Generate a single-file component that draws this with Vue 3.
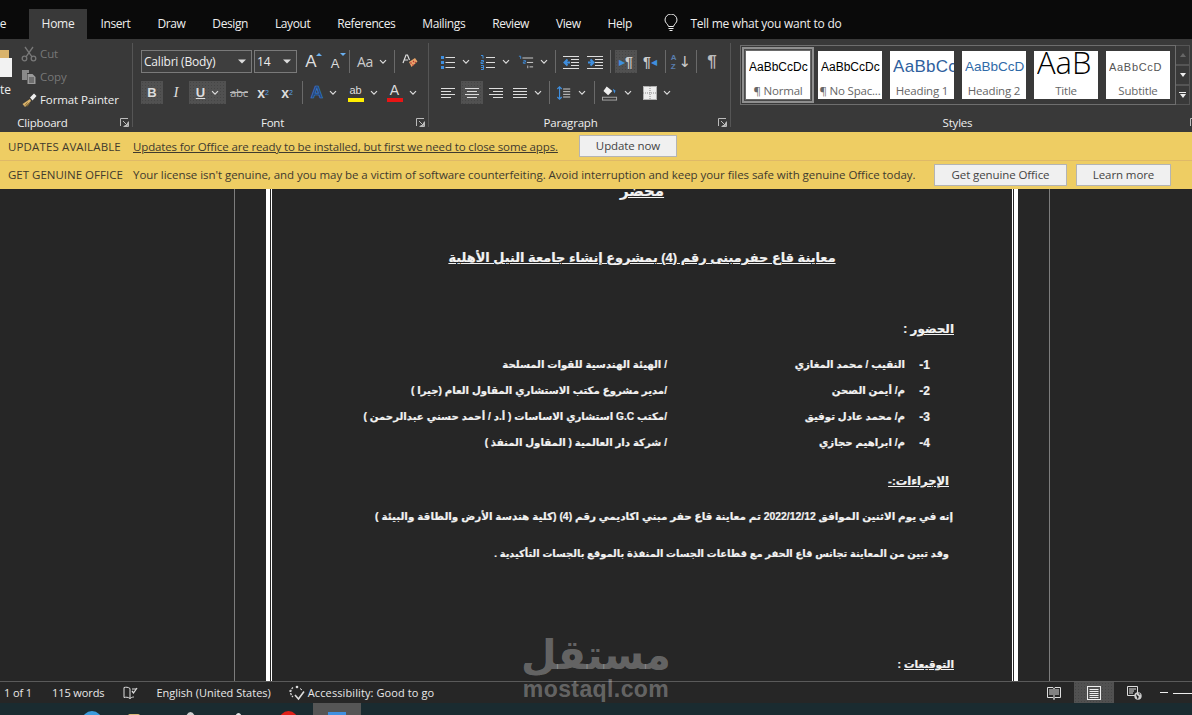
<script setup>
const tabs = ['Insert', 'Draw', 'Design', 'Layout', 'References', 'Mailings', 'Review', 'View', 'Help']
const styles = [
  { preview: 'AaBbCcDc', label: '¶ Normal', kind: 'normal' },
  { preview: 'AaBbCcDc', label: '¶ No Spac...', kind: 'plain' },
  { preview: 'AaBbCc', label: 'Heading 1', kind: 'h1' },
  { preview: 'AaBbCcD', label: 'Heading 2', kind: 'h2' },
  { preview: 'AaB', label: 'Title', kind: 'title' },
  { preview: 'AaBbCcD', label: 'Subtitle', kind: 'sub' }
]
const people = [
  ['1-', 'النقيب / محمد المغازي', '/ الهيئة الهندسية للقوات المسلحة'],
  ['2-', 'م/ أيمن الصحن', '/مدير مشروع مكتب الاستشاري المقاول العام (جيرا )'],
  ['3-', 'م/ محمد عادل توفيق', '/مكتب G.C استشاري الاساسات ( أ.د / أحمد حسني عبدالرحمن )'],
  ['4-', 'م/ ابراهيم حجازي', '/ شركة دار العالمية ( المقاول المنفذ )']
]
</script>

<template>
  <div class="app">
    <svg class="defs" aria-hidden="true">
      <symbol id="chev" viewBox="0 0 8 6"><path d="M1 1.2l3 3 3-3" fill="none" stroke="#ddd" stroke-width="1.2"/></symbol>
      <symbol id="tri" viewBox="0 0 8 5"><path d="M0 .5h8L4 4.5z" fill="#ddd"/></symbol>
      <symbol id="launch" viewBox="0 0 9 9"><path d="M.5 8V.5H8M8.5 3.5v5h-5M3 3l4 4M7.5 4.5v3h-3" fill="none" stroke="#bbb" stroke-width="1"/></symbol>
      <symbol id="cut" viewBox="0 0 16 16"><g fill="none" stroke="#787878" stroke-width="1.3"><circle cx="3.5" cy="12.5" r="2.3"/><circle cx="12.5" cy="12.5" r="2.3"/><path d="M5 10.8L12 1M11 10.8L4 1"/></g></symbol>
      <symbol id="copy" viewBox="0 0 16 16"><path d="M1 1h7v3H6v7H1z" fill="#8a8a8a"/><path d="M6.5 5h5l3 3v7h-8z" fill="#9a9a9a"/><path d="M8 9h5M8 11h5M8 13h5" stroke="#444"/></symbol>
      <symbol id="brush" viewBox="0 0 16 16"><path d="M9 7L1.5 12l2.5 3 6-6z" fill="#d9b36c"/><path d="M9 5.5l2.5 3L15.500 4 13 1.500z" fill="#eee"/><path d="M4 13.500L6.500 10.500M6 14.500L8.500 11" stroke="#8a6a30"/></symbol>
      <symbol id="clear" viewBox="0 0 16 16"><path d="M7 8l6-4 2.500 3.500-6 5.500z" fill="#e8a46a"/><path d="M8.500 8.500l1 1M11 7l1 1M10.500 10.500l1 1M13 8l.8.800" stroke="#b33" stroke-width="1.200"/><path d="M1 9L4 1h1.500l2 5M2.500 6h3.500" fill="none" stroke="#ddd" stroke-width="1.200"/></symbol>
      <symbol id="bul" viewBox="0 0 16 16"><path d="M1 2h3v3H1zM1 7h3v3H1zM1 12h3v3H1z" fill="#3f8fdf"/><path d="M5.500 3.500H15M5.500 8.500H15M5.500 13.500H15" stroke="#ddd"/></symbol>
      <symbol id="num" viewBox="0 0 16 16"><path d="M1 1.500h2v3M1 6.500h2.500v1.500H1v1.500h2.500M1 11.500h2.500v4H1M1 13.500h2.500" fill="none" stroke="#3f8fdf"/><path d="M6 3.500H15M6 8.500H15M6 13.500H15" stroke="#ddd"/></symbol>
      <symbol id="multi" viewBox="0 0 18 16"><path d="M1 1.500h2v3M6 6.500h2.500v1.500H6v1.500h2.500" fill="none" stroke="#3f8fdf"/><path d="M11 12v3" stroke="#ccc"/><path d="M5 3.500H17M10 8.500H17M13 13.500H17" stroke="#ddd"/></symbol>
      <symbol id="out" viewBox="0 0 16 16"><path d="M0 2.500H16M8 5.500H16M8 8.500H16M8 11.500H16M0 14.500H16" stroke="#ddd"/><path d="M7 8.500H3M4.500 5.500L1.500 8.500l3 3" fill="none" stroke="#3f8fdf" stroke-width="2"/></symbol>
      <symbol id="ind" viewBox="0 0 16 16"><path d="M0 2.500H16M8 5.500H16M8 8.500H16M8 11.500H16M0 14.500H16" stroke="#ddd"/><path d="M1 8.500h4M3.500 5.500l3 3-3 3" fill="none" stroke="#3f8fdf" stroke-width="2"/></symbol>
      <symbol id="al" viewBox="0 0 16 16"><path d="M1 3.500H15M1 6.500H11M1 9.500H15M1 12.500H11" stroke="#ddd"/></symbol>
      <symbol id="ac" viewBox="0 0 16 16"><path d="M1 3.500H15M3 6.500H13M1 9.500H15M3 12.500H13" stroke="#ddd"/></symbol>
      <symbol id="ar" viewBox="0 0 16 16"><path d="M1 3.500H15M5 6.500H15M1 9.500H15M5 12.500H15" stroke="#ddd"/></symbol>
      <symbol id="aj" viewBox="0 0 16 16"><path d="M1 3.500H15M1 6.500H15M1 9.500H15M1 12.500H15" stroke="#ddd"/></symbol>
      <symbol id="ls" viewBox="0 0 16 18"><path d="M3 2v14M.500 4.500L3 2l2.500 2.500M.500 13.500L3 16l2.500-2.500" fill="none" stroke="#3f8fdf" stroke-width="1.300"/><path d="M7 4.500h8M7 7.500h8M7 10.500h8M7 13.500h8" stroke="#ddd"/></symbol>
      <symbol id="shade" viewBox="0 0 17 16"><path d="M5 1L1.500 6l5 4.500L11 6z" fill="#eee"/><path d="M11.500 3.500l3 2-1.500 3z" fill="#3f8fdf"/><rect x=".500" y="12.500" width="15" height="3" fill="none" stroke="#aaa"/></symbol>
      <symbol id="bord" viewBox="0 0 14 14"><rect width="14" height="14" fill="#eee"/><path d="M7 0v14M0 7h14" stroke="#888" stroke-dasharray="1 1"/><path d="M.500.500h13v13H.500z" fill="none" stroke="#777" stroke-dasharray="1 1"/></symbol>
      <symbol id="proof" viewBox="0 0 15 14"><path d="M7 2.500C5 1 3 1 1 1.500v10c2-.5 4-.5 6 1 2-1.500 3-1.500 4-1.500M7 2.500v10M9 3h4" fill="none" stroke="#ddd"/><path d="M9 5l1.500 2L14 2" fill="none" stroke="#ddd" stroke-width="1.300"/></symbol>
      <symbol id="acc" viewBox="0 0 16 16"><path d="M4 2.500A6 6 0 0 0 4 12" fill="none" stroke="#ddd" stroke-width="1.300" stroke-dasharray="2 1"/><circle cx="8" cy="2" r="1.300" fill="#ddd"/><path d="M11 3.500l2 1.500M2 6H0" stroke="#ddd"/><path d="M6 10l3.500 4L15 6.500" fill="none" stroke="#ddd" stroke-width="1.600"/></symbol>
      <symbol id="read" viewBox="0 0 14 14"><path d="M.500 1.500h5.500l1 1 1-1h5.500v10H8l-1 1-1-1H.500z" fill="none" stroke="#ddd"/><path d="M2 4h4M2 6h4M2 8h4M8 4h4M8 6h4M8 8h4M7 2v12" stroke="#ddd"/></symbol>
      <symbol id="print" viewBox="0 0 14 14"><rect x=".500" y=".500" width="13" height="13" fill="none" stroke="#eee"/><path d="M2.500 3.500h9M2.500 5.500h9M2.500 7.500h9M2.500 9.500h9M2.500 11.500h9" stroke="#eee"/></symbol>
      <symbol id="web" viewBox="0 0 15 14"><path d="M.500.500h10v9h-10z" fill="none" stroke="#ddd"/><path d="M2 3h7M2 5h5M2 7h4" stroke="#ddd"/><circle cx="11" cy="10" r="3.700" fill="#ccc"/><path d="M9 8.500l2.500 2L10.500 13M12 7l1 2" stroke="#555"/></symbol>
      <symbol id="bulb" viewBox="0 0 14 18"><path d="M4.500 12.500C4 10 1 9 1 6a6 6 0 0 1 12 0c0 3-3 4-3.500 6.500z" fill="none" stroke="#eee"/><path d="M4.500 14.500h5M5.500 16.500h3" stroke="#eee"/></symbol>
    </svg>

    <div class="tabbar">
      <span class="tab cut-tab">File</span>
      <span class="tab active">Home</span>
      <span v-for="t in tabs" :key="t" class="tab">{{ t }}</span>
      <span class="tell">
        <svg class="bulb"><use href="#bulb"/></svg>
        Tell me what you want to do
      </span>
    </div>

    <div class="ribbon">
      <section class="group clip">
        <div class="clip-body">
          <div class="paste">
            <div class="paste-ico"><span class="paste-top"></span><span class="paste-doc"></span></div>
            <span class="paste-txt">Paste</span>
          </div>
          <div class="clip-list">
            <div class="clip-row dim"><svg class="i16"><use href="#cut"/></svg>Cut</div>
            <div class="clip-row dim"><svg class="i16"><use href="#copy"/></svg>Copy</div>
            <div class="clip-row"><svg class="i16"><use href="#brush"/></svg>Format Painter</div>
          </div>
        </div>
        <div class="glabel lab-clip">Clipboard</div>
        <svg class="launch"><use href="#launch"/></svg>
      </section>

      <section class="group font">
        <div class="row fr1">
          <div class="combo c-font"><span>Calibri (Body)</span><svg class="tri"><use href="#tri"/></svg></div>
          <div class="combo c-size"><span>14</span><svg class="tri"><use href="#tri"/></svg></div>
          <div class="ct"><span class="glyph big">A</span><span class="caret up"></span></div>
          <div class="ct"><span class="glyph small">A</span><span class="caret down"></span></div>
          <i class="sep"></i>
          <div class="ct"><span class="aa">Aa</span><svg class="chev"><use href="#chev"/></svg></div>
          <i class="sep"></i>
          <div class="ct"><svg class="i16"><use href="#clear"/></svg></div>
        </div>
        <div class="row fr2">
          <div class="ct on"><b class="glyph">B</b></div>
          <div class="ct"><em class="glyph ital">I</em></div>
          <div class="ct on"><b class="glyph under">U</b><svg class="chev"><use href="#chev"/></svg></div>
          <div class="ct"><span class="strike">abc</span></div>
          <div class="ct"><b class="glyph xx">x</b><sub class="scr">2</sub></div>
          <div class="ct"><b class="glyph xx">x</b><sup class="scr">2</sup></div>
          <i class="sep"></i>
          <div class="ct"><span class="glyph fx">A</span><svg class="chev"><use href="#chev"/></svg></div>
          <div class="ct"><span class="colored hl">ab</span><svg class="chev"><use href="#chev"/></svg></div>
          <div class="ct"><span class="colored fc">A</span><svg class="chev"><use href="#chev"/></svg></div>
        </div>
        <div class="glabel lab-font">Font</div>
        <svg class="launch"><use href="#launch"/></svg>
      </section>

      <section class="group para">
        <div class="row pr1">
          <div class="ct"><svg class="i16"><use href="#bul"/></svg><svg class="chev"><use href="#chev"/></svg></div>
          <div class="ct"><svg class="i16"><use href="#num"/></svg><svg class="chev"><use href="#chev"/></svg></div>
          <div class="ct"><svg class="i16"><use href="#multi"/></svg><svg class="chev"><use href="#chev"/></svg></div>
          <i class="sep"></i>
          <div class="ct"><svg class="i16"><use href="#out"/></svg></div>
          <div class="ct"><svg class="i16"><use href="#ind"/></svg></div>
          <i class="sep"></i>
          <div class="ct on ltr"><span class="mk">▶</span><b class="pil">¶</b></div>
          <div class="ct"><b class="pil">¶</b><span class="mk">◀</span></div>
          <i class="sep"></i>
          <div class="ct sort"><span class="az">A<br>Z</span><span class="arrow">↓</span></div>
          <i class="sep"></i>
          <div class="ct"><b class="pil large">¶</b></div>
        </div>
        <div class="row pr2">
          <div class="ct"><svg class="i16"><use href="#al"/></svg></div>
          <div class="ct on"><svg class="i16"><use href="#ac"/></svg></div>
          <div class="ct"><svg class="i16"><use href="#ar"/></svg></div>
          <div class="ct"><svg class="i16"><use href="#aj"/></svg><svg class="chev"><use href="#chev"/></svg></div>
          <i class="sep"></i>
          <div class="ct"><svg class="i16"><use href="#ls"/></svg><svg class="chev"><use href="#chev"/></svg></div>
          <i class="sep"></i>
          <div class="ct"><svg class="i16"><use href="#shade"/></svg><svg class="chev"><use href="#chev"/></svg></div>
          <div class="ct"><svg class="i14"><use href="#bord"/></svg><svg class="chev"><use href="#chev"/></svg></div>
        </div>
        <div class="glabel lab-para">Paragraph</div>
        <svg class="launch"><use href="#launch"/></svg>
      </section>

      <section class="group gallery-group">
        <div class="gallery-wrap">
          <div class="gallery">
            <div v-for="s in styles" :key="s.kind" class="tile" :class="s.kind">
              <div class="pv">{{ s.preview }}</div>
              <div class="tl">{{ s.label }}</div>
            </div>
          </div>
          <div class="gscroll">
            <div class="gs"><span class="gt dimmed"></span></div>
            <div class="gs"><span class="gt"></span></div>
            <div class="gs"><span class="gbar"></span><span class="gt"></span></div>
          </div>
        </div>
        <div class="glabel lab-styles">Styles</div>
        <svg class="launch last"><use href="#launch"/></svg>
      </section>
    </div>

    <div class="msg first">
      <span class="mlabel">UPDATES AVAILABLE</span>
      <span class="mtext link">Updates for Office are ready to be installed, but first we need to close some apps.</span>
      <button class="mbtn b-update">Update now</button>
    </div>
    <div class="msg second">
      <span class="mlabel">GET GENUINE OFFICE</span>
      <span class="mtext">Your license isn't genuine, and you may be a victim of software counterfeiting. Avoid interruption and keep your files safe with genuine Office today.</span>
      <button class="mbtn b-genuine">Get genuine Office</button>
      <button class="mbtn b-learn">Learn more</button>
    </div>

    <main class="doc">
      <div class="page">
        <div class="frame">
          <div class="inner" dir="rtl">
            <h1 class="t-main">محضر</h1>
            <h2 class="t-sub">معاينة قاع حفرمبنى رقم (4) بمشروع إنشاء جامعة النيل الأهلية</h2>
            <p class="ln h-att"><u>الحضور</u> :</p>
            <div class="people">
              <div v-for="p in people" :key="p[0]" class="person">
                <span class="pnum">{{ p[0] }}</span><span>{{ p[1] }}</span><span>{{ p[2] }}</span>
              </div>
            </div>
            <p class="ln h-proc"><u>الإجراءات:-</u></p>
            <p class="ln p1">إنه في يوم الاثنين الموافق 2022/12/12 تم معاينة قاع حفر مبني اكاديمي رقم (4) (كلية هندسة الأرض والطاقة والبيئة )</p>
            <p class="ln p2">وقد تبين من المعاينة تجانس قاع الحفر مع قطاعات الجسات المنفذة بالموقع بالجسات التأكيدية .</p>
            <p class="ln h-sign"><u>التوقيعات</u> :</p>
          </div>
        </div>
      </div>
    </main>

    <footer class="status">
      <span class="st s-page">1 of 1</span>
      <span class="st s-words">115 words</span>
      <svg class="i15 s-proof"><use href="#proof"/></svg>
      <span class="st s-lang">English (United States)</span>
      <svg class="i16 s-acc"><use href="#acc"/></svg>
      <span class="st s-a11y">Accessibility: Good to go</span>
      <svg class="i14 s-read"><use href="#read"/></svg>
      <div class="s-print"><svg class="i14"><use href="#print"/></svg></div>
      <svg class="i15 s-web"><use href="#web"/></svg>
      <span class="s-minus"></span>
      <span class="s-slider"></span>
    </footer>

    <div class="taskbar">
      <span class="tb tb1"></span>
      <span class="tb tb2"></span>
      <span class="tb tb3"></span>
      <span class="tb tb4"></span>
      <span class="tb tb5"></span>
      <span class="tb-active"><span class="tb-word"></span></span>
    </div>

    <div class="mark">
      <div class="mark-ar" dir="rtl">مستقل</div>
      <div class="mark-en">mostaql.com</div>
    </div>
  </div>
</template>

<style scoped>
.app {
  position: relative;
  width: 1192px;
  height: 715px;
  overflow: hidden;
  display: flex;
  flex-direction: column;
  background: #262626;
  font-family: "Open Sans", "Noto Sans", sans-serif;
  font-size: 11.5px;
  color: #eee;
}
.defs { position: absolute; width: 0; height: 0; }

/* tabs */
.tabbar {
  height: 39px;
  flex: none;
  background: #0a0a0a;
  display: flex;
  align-items: flex-end;
}
.tab {
  height: 30px;
  line-height: 30px;
  padding: 0 13.500px;
  font-size: 12px;
  letter-spacing: -.41px;
  color: #eee;
  white-space: nowrap;
}
.cut-tab { width: 29px; box-sizing: border-box; padding: 0 23px 0 0; text-align: right; direction: rtl; overflow: hidden; }
.active { background: #393939; padding: 0 12px; width: 58px; box-sizing: border-box; text-align: center; letter-spacing: -.25px; }
.tell {
  display: flex;
  align-items: center;
  height: 28px;
  margin: 0 0 2px 19px;
  font-size: 12px;
  letter-spacing: -.25px;
  gap: 12px;
  color: #eee;
}
.bulb { width: 14px; height: 18px; }

/* ribbon */
.ribbon {
  height: 93px;
  flex: none;
  background: #393939;
  display: flex;
}
.group {
  position: relative;
  box-sizing: border-box;
  margin-top: 4px;
  height: 84px;
  padding-top: 7px;
  border-right: 1px solid #555;
  flex: none;
}
.glabel {
  position: absolute;
  left: 0;
  right: 0;
  top: 73px;
  height: 14px;
  line-height: 14px;
  font-size: 11.500px;
  letter-spacing: -.2px;
  text-align: center;
  color: #eee;
}
.launch { position: absolute; right: 3px; bottom: 0; width: 9px; height: 9px; }
.launch.last { right: -7px; }

.clip { width: 133px; padding-top: 0; }
.clip-body { display: flex; margin-top: -1px; }
.paste {
  width: 21px;
  height: 70px;
  overflow: hidden;
  display: flex;
  flex-direction: column;
  align-items: flex-end;
}
.paste-ico { position: relative; width: 21px; height: 34px; margin-top: 8px; flex: none; }
.paste-top { position: absolute; left: -6px; top: 0; width: 15px; height: 8px; background: #d9b36c; }
.paste-doc { position: absolute; left: -10px; top: 8px; width: 22px; height: 19px; background: #f2f2f2; }
.paste-txt { width: 21px; padding-right: 10px; box-sizing: border-box; direction: rtl; margin-top: -2px; line-height: 16px; white-space: nowrap; overflow: hidden; flex: none; font-size: 12px; }
.clip-list { display: flex; flex-direction: column; }
.clip-row { height: 23px; display: flex; align-items: center; gap: 3px; letter-spacing: -.1px; white-space: nowrap; }
.dim { color: #777; }
.lab-clip { right: auto; left: 17px; width: 51px; }
.lab-font { right: 16px; }
.lab-para { right: 18px; }
.lab-styles { right: 8px; }
.i16 { width: 16px; height: 16px; flex: none; display: block; }
.i14 { width: 14px; height: 14px; flex: none; display: block; }
.i15 { width: 15px; height: 14px; flex: none; display: block; }
.chev { width: 8px; height: 6px; flex: none; margin-left: 6px; }
.tri { width: 8px; height: 5px; flex: none; }

.font { width: 296px; padding-left: 8px; }
.para { width: 302px; padding-left: 6px; }
.row { display: grid; height: 23px; align-items: center; }
.row + .row { margin-top: 8px; }
.fr1 { grid-template-columns: 113px 43px 28px 20px 5px 44px 1px 30px; }
.fr2 { grid-template-columns: 22px 26px 37px 26px 22px 26px 3px 42px 35px 43px; }
.pr1 { grid-template-columns: 40px 39px 37px 5px 30px 18px 7px 26px 26px 3px 30px 1px 30px; }
.pr2 { grid-template-columns: 26px 22px 26px 35px 6px 42px 3px 44px 35px; }
.sep { justify-self: end; width: 1px; height: 23px; background: #6a6a6a; display: block; }
.ct { height: 23px; display: flex; align-items: center; justify-content: center; position: relative; }
.on {
  background-color: #515151;
  background-image: radial-gradient(#454545 .6px, transparent .7px);
  background-size: 3px 3px;
}
.ltr { margin-left: 4px; }
.combo {
  box-sizing: border-box;
  height: 23px;
  border: 1px solid #7a7a7a;
  background: #3e3e3e;
  display: flex;
  align-items: center;
  justify-content: space-between;
  padding: 0 5px 0 2px;
  font-size: 12px;
  letter-spacing: -.2px;
}
.c-font { width: 111px; }
.c-size { width: 43px; }
.glyph { font-family: "Liberation Sans", sans-serif; font-size: 13px; color: #ddd; line-height: 1; }
.big { font-size: 17px; }
.small { font-size: 13px; margin-top: 3px; }
.xx { font-size: 14px; }
.caret { position: absolute; top: 3px; margin-left: 15px; width: 0; height: 0; border-left: 3px solid transparent; border-right: 3px solid transparent; }
.caret.up { border-bottom: 3px solid #6ab0f0; }
.caret.down { border-top: 3px solid #6ab0f0; }
.aa { font-size: 14px; color: #ccc; letter-spacing: -.2px; }
.ital { font-family: "Liberation Serif", serif; font-size: 15px; }
.under { text-decoration: underline; }
.strike { font-size: 11.500px; color: #bbb; text-decoration: line-through; letter-spacing: -.3px; }
.scr { font-size: 7px; color: #5aa5ea; font-family: "Liberation Sans", sans-serif; line-height: 1; }
.fx { color: #23457a; font-size: 17px; font-weight: 700; -webkit-text-stroke: .7px #3a7fd5; }
.colored { display: block; width: 16px; text-align: center; color: #ddd; font-family: "Liberation Sans", sans-serif; line-height: 14px; padding-bottom: 1px; }
.hl { border-bottom: 4px solid #ffee00; font-size: 11px; }
.fc { border-bottom: 4px solid #e81515; font-size: 14px; }
.pil { font-family: "Liberation Sans", sans-serif; font-size: 14px; color: #ccc; line-height: 1; }
.pil.large { font-size: 17px; color: #bbb; }
.mk { font-size: 8px; color: #3f8fdf; line-height: 1; }
.sort { gap: 2px; }
.az { font-size: 8px; line-height: 9px; color: #5a7fb0; font-weight: 700; font-family: "Liberation Sans", sans-serif; }
.arrow { font-size: 15px; color: #ccc; font-family: "DejaVu Sans", sans-serif; }

/* styles gallery */
.gallery-group { flex: 1; border-right: 0; padding: 2px 0 0 9px; }
.gallery-wrap { display: flex; }
.gallery {
  box-sizing: border-box;
  width: 436px;
  height: 60px;
  border: 1px solid #6e6e6e;
  padding: 5px;
  display: flex;
  gap: 8px;
}
.tile {
  width: 64px;
  height: 48px;
  flex: none;
  background: #fff;
  overflow: hidden;
  display: flex;
  flex-direction: column;
  align-items: center;
  color: #000;
}
.normal { box-shadow: 0 0 0 1px #6a6a6a, 0 0 0 2px #4a4a4a, 0 0 0 4px #8f8f8f; }
.pv {
  height: 32px;
  line-height: 32px;
  width: 61px;
  margin-left: 3px;
  overflow: hidden;
  white-space: nowrap;
  font-family: "Liberation Sans", sans-serif;
  font-size: 12px;
  flex: none;
}
.tl { font-size: 11.500px; letter-spacing: -.2px; color: #666; line-height: 16px; white-space: nowrap; }
.h1 .pv { font-size: 17px; color: #2f5f9e; letter-spacing: .3px; }
.h2 .pv { font-size: 13.500px; color: #2f6aa8; }
.title .pv { font-family: "Open Sans", sans-serif; font-weight: 300; font-size: 31px; line-height: 22px; width: 64px; margin-left: 6px; }
.sub .pv { font-size: 11px; color: #555; letter-spacing: .7px; }
.gscroll { display: flex; flex-direction: column; width: 14px; }
.gs {
  box-sizing: border-box;
  height: 20px;
  border: 1px solid #555;
  border-left: 0;
  display: flex;
  flex-direction: column;
  align-items: center;
  justify-content: center;
  gap: 1px;
}
.gt { width: 0; height: 0; border-left: 3.500px solid transparent; border-right: 3.500px solid transparent; border-top: 4px solid #eee; }
.gt.dimmed { border-top: 0; border-bottom: 4px solid #666; }
.gbar { width: 7px; height: 1px; background: #eee; }

/* message bars */
.msg {
  flex: none;
  box-sizing: border-box;
  height: 28.500px;
  background: #eecd63;
  color: #3f3a2e;
  display: flex;
  align-items: center;
  padding-left: 8px;
  font-size: 11.500px;
  letter-spacing: -.05px;
  white-space: nowrap;
}
.first { border-bottom: 1px solid #dfb968; padding-top: 2px; }
.mlabel { width: 125px; flex: none; letter-spacing: .13px; }
.second .mlabel { letter-spacing: 0; }
.mtext { flex: none; }
.link { text-decoration: underline; width: 446px; letter-spacing: -.13px; }
.mbtn {
  box-sizing: border-box;
  height: 22px;
  padding: 0;
  background: #f0f0f0;
  border: 1px solid #b4b4b4;
  color: #444;
  font: inherit;
  letter-spacing: -.1px;
  flex: none;
}
.first .mbtn { margin-top: -2px; }
.b-update { width: 98px; }
.second .mtext { width: 801px; }
.b-genuine { width: 133px; }
.b-learn { width: 95px; margin-left: 9px; }

/* document */
.doc { flex: none; height: 492px; background: #262626; overflow: hidden; }
.page {
  box-sizing: border-box;
  margin-left: 234px;
  width: 816px;
  height: 100%;
  border-left: 1px solid #7c7c7c;
  border-right: 1px solid #7c7c7c;
  padding: 0 31px;
}
.frame {
  box-sizing: border-box;
  height: 100%;
  border-left: 4px solid #fff;
  border-right: 4px solid #fff;
  padding: 0 1px;
}
.inner {
  display: flow-root;
  box-sizing: border-box;
  height: 100%;
  border-left: 1px solid #fff;
  border-right: 1px solid #fff;
  font-family: "Liberation Sans", "DejaVu Sans", sans-serif;
  font-weight: 700;
  font-size: 10.400px;
  color: #f2f2f2;
  -webkit-text-stroke: .2px #f2f2f2;
}
.t-main { margin: -10px 0 0; font-size: 15px; line-height: 24px; text-align: center; text-decoration: underline; font-weight: 700; }
.t-sub { margin: 44px 0 0; font-size: 12.900px; line-height: 22px; text-align: center; text-decoration: underline; font-weight: 700; }
.ln { margin: 0; line-height: 20px; white-space: nowrap; }
.h-att { margin-top: 50px; padding-right: 58px; font-size: 12px; }
.people { margin-top: 16px; padding-right: 82px; }
.person { display: grid; grid-template-columns: 25px 238px 1fr; height: 26px; line-height: 20px; white-space: nowrap; font-size: 10.200px; }
.pnum { font-size: 12px; }
.h-proc { margin-top: 12px; padding-right: 63px; font-size: 11.500px; }
.p1 { margin-top: 16px; padding-right: 59px; }
.p2 { margin-top: 17px; padding-right: 63px; font-size: 9.900px; }
.h-sign { margin-top: 90px; padding-right: 58px; font-size: 10.500px; }

/* status */
.status {
  flex: none;
  box-sizing: border-box;
  height: 22px;
  background: #262626;
  border-top: 1px solid #5a5a5a;
  display: flex;
  align-items: center;
  font-size: 11px;
  color: #e8e8e8;
  white-space: nowrap;
}
.st { flex: none; }
.s-page { margin-left: 4px; letter-spacing: -.1px; }
.s-words { margin-left: 20px; letter-spacing: -.1px; }
.s-proof { margin-left: 19px; }
.s-lang { margin-left: 18px; }
.s-acc { margin-left: 18px; }
.s-a11y { margin-left: 3px; letter-spacing: .1px; }
.s-read { margin-left: auto; }
.s-print {
  margin-left: 13px;
  width: 40px;
  height: 100%;
  display: flex;
  align-items: center;
  justify-content: center;
  background-color: #515151;
  background-image: radial-gradient(#454545 .6px, transparent .7px);
  background-size: 3px 3px;
}
.s-web { margin-left: 13px; }
.s-minus { width: 8px; height: 1px; background: #eee; margin-left: 18px; flex: none; }
.s-slider { width: 19px; height: 1px; background: #eee; margin-left: 5px; flex: none; margin-top: 2px; }

/* taskbar */
.taskbar {
  flex: none;
  height: 12px;
  background: #1a2b30;
  display: flex;
  overflow: hidden;
}
.tb { flex: none; display: block; border-radius: 50%; height: 20px; margin-top: 8px; }
.tb1 { width: 20px; margin-left: 82px; background: #3b9bdc; }
.tb2 { width: 12px; margin-left: 26px; background: #d8b878; margin-top: 11px; border-radius: 2px; }
.tb3 { width: 11px; margin-left: 45px; background: #cfcfcf; margin-top: 9px; }
.tb4 { width: 9px; margin-left: 38px; background: #e8e8e8; margin-top: 10px; }
.tb5 { width: 19px; margin-left: 36px; background: #e02018; }
.tb-active { flex: none; width: 48px; margin-left: 15px; background: #555; display: flex; justify-content: center; }
.tb-word { width: 18px; height: 10px; margin-top: 9px; background: #3f8fdf; }

/* watermark, lying over the page */
.mark {
  position: absolute;
  left: 500px;
  top: 628px;
  width: 192px;
  text-align: center;
  color: rgba(255, 255, 255, .3);
  font-weight: 700;
  pointer-events: none;
}
.mark-ar { font-family: "DejaVu Sans", sans-serif; font-size: 41px; line-height: 54px; }
.mark-en { font-family: "Liberation Sans", sans-serif; font-size: 23px; line-height: 20px; letter-spacing: .4px; margin-top: -3px; }
</style>
